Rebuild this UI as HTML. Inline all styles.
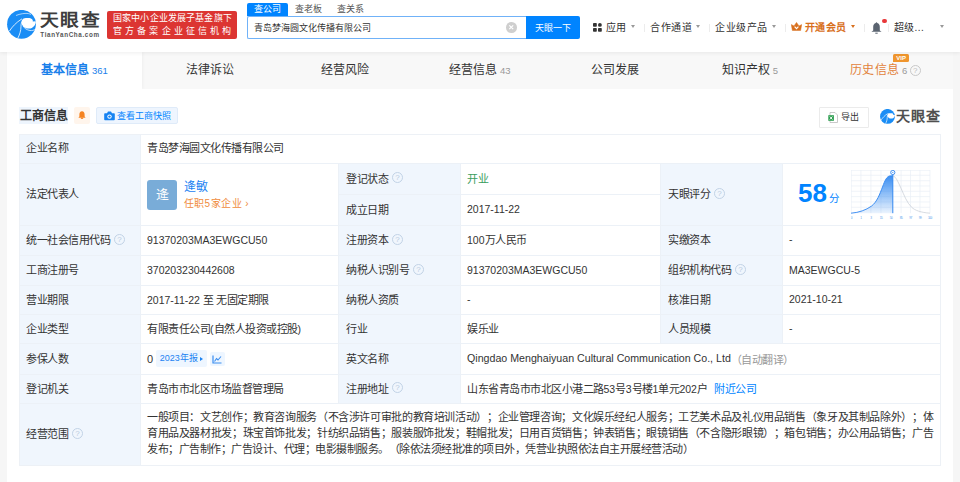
<!DOCTYPE html>
<html lang="zh-CN"><head><meta charset="utf-8">
<style>
*{box-sizing:border-box;margin:0;padding:0}
html,body{width:960px;height:482px;overflow:hidden}
body{text-spacing-trim:space-all;background:#f6f6f6;font-family:"Liberation Sans", sans-serif;color:#333;font-size:10.5px;position:relative}
.abs{position:absolute}
#hdr{position:absolute;left:0;top:0;width:960px;height:52px;background:#fff;box-shadow:0 1px 4px rgba(0,0,0,0.07);z-index:3}
.logotxt{position:absolute;left:40px;top:9px;font-size:17px;font-weight:bold;color:#3d3d3d;letter-spacing:1.6px;line-height:24px;transform:scaleX(1.1);transform-origin:0 0}
.logourl{position:absolute;left:40.3px;top:30.5px;font-size:6.3px;font-weight:bold;color:#555;letter-spacing:0.62px;line-height:8px}
.badge{position:absolute;left:107px;top:10.5px;width:130px;height:28px;background:#dc3532;border-radius:2px;color:#fff;font-size:9px;line-height:12.5px;padding-top:1.5px;padding-left:6px}
.badge div{white-space:nowrap}
.stab{position:absolute;top:3px;height:13.3px;font-size:9px;line-height:13.3px;color:#555;text-align:center}
.stab.on{background:#0084ff;color:#fff;border-radius:2px 2px 0 0}
.sinput{position:absolute;left:247px;top:16.3px;width:279px;height:23px;border:1px solid #70b2f8;border-right:none;border-radius:2px 0 0 2px;background:#fff}
.sinput span{position:absolute;left:5.5px;top:0.6px;line-height:21px;font-size:9px;color:#333}
.clr{position:absolute;left:258px;top:5.2px;width:10.5px;height:10.5px;border-radius:50%;background:#cfcfcf}
.sbtn{position:absolute;left:526px;top:16.3px;width:54px;height:23px;background:#0084ff;border-radius:0 2px 2px 0;color:#fff;font-size:9px;line-height:24.5px;text-align:center}
.nav{position:absolute;top:21px;line-height:14px;font-size:10px;letter-spacing:0.5px;color:#333;white-space:nowrap}
.arr{position:absolute;top:25.2px;width:0;height:0;border-left:2.6px solid transparent;border-right:2.6px solid transparent;border-top:3px solid #999}
.sep{position:absolute;top:23.5px;width:1px;height:8.5px;background:#ececec}
#tabbar{position:absolute;left:7px;top:52px;width:946px;height:37px;background:#f8f8f8}
.tab{position:absolute;top:0;height:37px;text-align:center;line-height:37px;white-space:nowrap}
.tab.active{background:#fff;box-shadow:1px 0 3px rgba(0,0,0,0.04)}
.tt{font-size:12px;color:#333}
.tn{font-size:9.5px;color:#999;margin-left:2.5px}
.active .tt{color:#1a80ea;font-weight:bold}
.active .tn{color:#1a80ea;font-size:9.5px}
.hist .tt{color:#e2833c;letter-spacing:0.3px}
.vip{position:absolute;left:75px;top:1.8px;width:16.5px;height:8.5px;background:#f0962e;color:#fff;font-size:6px;line-height:8.5px;font-weight:bold;border-radius:1.5px 1.5px 1.5px 0;text-align:center}
#card{position:absolute;left:7px;top:89px;width:946px;height:393px;background:#fff}
.sect{position:absolute;left:19px;top:107px;width:49px;height:17px;font-size:12px;font-weight:bold;line-height:19px;color:#333;background:#eef5fd;padding-left:0.5px;overflow:hidden}
.bellb{position:absolute;left:74px;top:107.3px;width:15.5px;height:16.5px;background:#fff5ec;border-radius:2px}
.snap{position:absolute;left:96px;top:107px;width:81.5px;height:16.5px;background:#eef5fe;border:1px solid #dfebf9;border-radius:2px;color:#0084ff;font-size:9px;line-height:16.5px;padding-left:20px}
.export{position:absolute;left:819px;top:107.3px;width:49.5px;height:20.5px;border:1px solid #ebebeb;border-radius:1px;background:#fff;font-size:9px;line-height:18.5px;padding-left:21px;color:#333}
#tbl{position:absolute;left:19px;top:134px;width:922px;height:332px}
#tblb{position:absolute;left:19px;top:134px;width:922px;height:332px;border:1px solid #edf1f6}
.cell{position:absolute;display:flex;align-items:center;padding-left:6px;padding-bottom:2.5px;border-right:1px solid #ecf1f7;border-bottom:1px solid #ecf1f7;white-space:nowrap;font-size:11px;letter-spacing:-0.5px;color:#333}
.lat{font-size:10.5px;letter-spacing:0;padding-bottom:2px}
.ln{font-size:10.5px;letter-spacing:0}
.lab{background:#f0f6fd;padding-left:7px}
.q{display:inline-block;width:11px;height:11px;border:0.8px solid #c2d3e6;border-radius:50%;color:#b9cbe0;font-size:8px;line-height:10px;text-align:center;margin-left:4px;vertical-align:middle;letter-spacing:0}
.tq{border-color:#c8c8c8;color:#bbb;margin-left:2.5px;vertical-align:1px;width:11px;height:11px;line-height:10px;font-size:8px}
.avatar{width:30px;height:30px;background:#79acd8;border-radius:3px;color:#fff;font-size:13px;text-align:center;line-height:30px;margin-left:0;margin-top:3.5px;letter-spacing:0}
.rep{margin-left:6.5px;margin-top:5px}
.repname{color:#1b82f2;font-size:12px;letter-spacing:0;line-height:15px;margin-top:-2px}
.repjob{color:#f08c3c;font-size:10px;letter-spacing:0.5px;line-height:13px;margin-top:2px}
.score{position:absolute;left:15px;top:17px;white-space:nowrap;letter-spacing:0}
.num{font-size:26px;font-weight:bold;color:#0084ff;line-height:24px}
.fen{font-size:10.5px;color:#0084ff;margin-left:2px}
.curve{position:absolute;left:67.5px;top:6.3px}
.nb{display:inline-block;margin-left:3px;height:16.5px;line-height:16.5px;padding:0 4px;letter-spacing:0;background:#eef6ff;color:#1b82f2;font-size:9px;border-radius:2px}
.tri{display:inline-block;width:0;height:0;border-top:2.5px solid transparent;border-bottom:2.5px solid transparent;border-left:3px solid #1b82f2;margin-left:2px;vertical-align:middle}
.chartic{display:inline-flex;align-items:center;justify-content:center;width:15px;height:13.5px;background:#eef6ff;border-radius:2px;margin-left:3px;margin-top:1px}
.scope{text-spacing-trim:space-all;margin-top:-0.5px;white-space:normal;width:786px;font-size:11px;letter-spacing:-0.5px;line-height:16px;text-align:justify;color:#333}
</style></head><body>
<div id="hdr">
<svg class="abs" style="left:7px;top:10.3px" width="29" height="29" viewBox="0 0 29 29">
<defs><clipPath id="cc"><circle cx="14.5" cy="14.3" r="14.4"/></clipPath></defs>
<circle cx="14.5" cy="14.3" r="14.4" fill="#1a8df5"/>
<g clip-path="url(#cc)">
<path d="M16.5,8.4 C19.5,7.9 22,7.9 23.4,8.2 C25,8.7 26.3,10 25.7,11.6 L30,11.3 L30,13.4 L28.6,13.3 C28.2,14.8 27.6,15.6 26.9,16.2 C25.8,17.5 24.5,18.2 23.4,18.4 C22,18.6 20.5,18.5 19.3,18.2 C17.8,17.8 16.6,17 15.9,16.1 C14.8,14.8 14.3,13.6 14.4,12.3 C14.5,10.9 15,9.9 15.5,9.4 C15.9,8.9 16.2,8.6 16.5,8.4Z" fill="#fff"/>
<path d="M2.5,21 C5,17 9,12.5 15,8.8" stroke="#fff" stroke-width="0.8" fill="none"/>
<path d="M9,5.5 C13,3.8 18,3.2 20,3.4 C22,3.6 23,4 24,4.6" stroke="#fff" stroke-width="0.7" fill="none" opacity="0.9"/>
<path d="M10.5,28.8 C12.5,25 14,21 14,16.2 C14,14 14.5,12.5 15,11.7" stroke="#fff" stroke-width="0.8" fill="none"/>
<path d="M16,16 C17.5,18.5 20,20 23,20.5 C25,20.8 27,20.3 28.5,19" stroke="#fff" stroke-width="0.7" fill="none"/>
</g>
</svg>
<div class="logotxt">天眼查</div>
<div class="logourl">TianYanCha.com</div>
<div class="badge"><div style="letter-spacing:0.15px">国家中小企业发展子基金旗下</div><div style="letter-spacing:3.15px">官方备案企业征信机构</div></div>
<div class="stab on" style="left:247px;width:41px">查公司</div>
<div class="stab" style="left:294px;width:29px">查老板</div>
<div class="stab" style="left:336px;width:29px">查关系</div>
<div class="sinput"><span>青岛梦海圆文化传播有限公司</span><div class="clr"><svg width="10.5" height="10.5" viewBox="0 0 10.5 10.5"><path d="M3.3 3.3L7.2 7.2M7.2 3.3L3.3 7.2" stroke="#fff" stroke-width="1.2"/></svg></div></div>
<div class="sbtn">天眼一下</div>
<svg class="abs" style="left:593px;top:23px" width="9" height="9" viewBox="0 0 9 9"><rect x="0" y="0" width="3.8" height="3.8" rx="0.8" fill="#333"/><rect x="5" y="0" width="3.8" height="3.8" rx="1.9" fill="#333"/><rect x="0" y="5" width="3.8" height="3.8" rx="0.8" fill="#333"/><rect x="5" y="5" width="3.8" height="3.8" rx="0.8" fill="#333"/></svg>
<div class="nav" style="left:605.5px">应用</div>
<div class="arr" style="left:631px"></div>
<div class="sep" style="left:644px"></div>
<div class="nav" style="left:650px">合作通道</div>
<div class="arr" style="left:696px"></div>
<div class="sep" style="left:709px"></div>
<div class="nav" style="left:715px">企业级产品</div>
<div class="arr" style="left:771.5px"></div>
<div class="sep" style="left:785px"></div>
<svg class="abs" style="left:791px;top:22.2px" width="11" height="9" viewBox="0 0 11 9"><path d="M0.3 2.6L3 4L5.5 0.4L8 4L10.7 2.6L9.6 8.6H1.4Z" fill="#d8701e" stroke="#d8701e" stroke-width="0.5" stroke-linejoin="round"/><path d="M3.6 4.6L5.5 6.7L7.4 4.6" stroke="#fff" stroke-width="1.1" fill="none"/></svg>
<div class="nav" style="left:804.5px;top:20.5px;color:#d8701e;font-weight:bold">开通会员</div>
<div class="arr" style="left:851px;border-top-color:#d8701e"></div>
<div class="sep" style="left:863.5px"></div>
<svg class="abs" style="left:870.5px;top:21.8px" width="11" height="12" viewBox="0 0 11 12"><path d="M5.5 0.3C5 0.3 4.8 0.6 4.8 1C3 1.4 2.2 3 2.2 5V8.6L0.4 9.8H10.6L8.8 8.6V5C8.8 3 8 1.4 6.2 1C6.2 0.6 6 0.3 5.5 0.3Z" fill="#5b6470"/><path d="M4.3 11.2H6.7" stroke="#5b6470" stroke-width="1"/></svg>
<div class="abs" style="left:882px;top:18.8px;width:4.6px;height:4.6px;border-radius:50%;background:#e8383a"></div>
<div class="sep" style="left:888px"></div>
<div class="nav" style="left:893.5px">超级...</div>
<div class="arr" style="left:939.5px"></div>
</div>
<div id="tabbar">
<div class="tab active" style="left:0.00px;width:135.14px"><span class="tt">基本信息</span><span class="tn">361</span></div>
<div class="tab " style="left:135.14px;width:135.14px"><span class="tt">法律诉讼</span></div>
<div class="tab " style="left:270.29px;width:135.14px"><span class="tt">经营风险</span></div>
<div class="tab " style="left:405.43px;width:135.14px"><span class="tt">经营信息</span><span class="tn">43</span></div>
<div class="tab " style="left:540.57px;width:135.14px"><span class="tt">公司发展</span></div>
<div class="tab " style="left:675.71px;width:135.14px"><span class="tt">知识产权</span><span class="tn">5</span></div>
<div class="tab hist" style="left:810.86px;width:135.14px"><span class="tt">历史信息</span><span class="tn">6</span><span class="q tq">?</span><span class="vip">VIP</span></div>
</div>
<div id="card"></div>
<div class="sect">工商信息</div>
<div class="bellb"><svg style="position:absolute;left:4px;top:3.7px" width="8" height="8" viewBox="0 0 8 8"><path d="M4 0.3C2.2 0.3 1.4 1.7 1.4 3.4V5.6L0.4 6.8H7.6L6.6 5.6V3.4C6.6 1.7 5.8 0.3 4 0.3Z" fill="#f5821f"/><ellipse cx="4" cy="7.2" rx="1.3" ry="0.8" fill="#f5821f"/></svg></div>
<div class="snap"><svg style="position:absolute;left:6.5px;top:3px" width="11" height="9.5" viewBox="0 0 11 9.5"><path d="M1 2.2H3L4 0.6H7L8 2.2H10C10.5 2.2 10.8 2.5 10.8 3V8.5C10.8 9 10.5 9.3 10 9.3H1C0.5 9.3 0.2 9 0.2 8.5V3C0.2 2.5 0.5 2.2 1 2.2Z" fill="#1682f2"/><circle cx="5.5" cy="5.6" r="2.2" fill="#fff"/><circle cx="5.5" cy="5.6" r="1.2" fill="#1682f2"/></svg>查看工商快照</div>
<div class="export"><svg style="position:absolute;left:8px;top:4px" width="10" height="11" viewBox="0 0 10 11"><path d="M2 0.5H7L9.5 3V10.5H2Z" fill="#fff" stroke="#bbb" stroke-width="0.8"/><rect x="0.3" y="3.2" width="5.6" height="5.6" fill="#2c9e4f"/><path d="M1.8 4.5L4.4 7.5M4.4 4.5L1.8 7.5" stroke="#fff" stroke-width="0.9"/></svg>导出</div>
<svg class="abs" style="left:880px;top:108.7px" width="15" height="15" viewBox="0 0 29 29">
<circle cx="14.5" cy="14.3" r="14.4" fill="#1a8df5"/>
<g clip-path="url(#cc)">
<path d="M16.5,8.4 C19.5,7.9 22,7.9 23.4,8.2 C25,8.7 26.3,10 25.7,11.6 L30,11.3 L30,13.4 L28.6,13.3 C28.2,14.8 27.6,15.6 26.9,16.2 C25.8,17.5 24.5,18.2 23.4,18.4 C22,18.6 20.5,18.5 19.3,18.2 C17.8,17.8 16.6,17 15.9,16.1 C14.8,14.8 14.3,13.6 14.4,12.3 C14.5,10.9 15,9.9 15.5,9.4 C15.9,8.9 16.2,8.6 16.5,8.4Z" fill="#fff"/>
<path d="M2.5,21 C5,17 9,12.5 15,8.8" stroke="#fff" stroke-width="1.3" fill="none"/>
<path d="M10.5,28.8 C12.5,25 14,21 14,16.2 C14,14 14.5,12.5 15,11.7" stroke="#fff" stroke-width="1.3" fill="none"/>
</g>
</svg>
<div class="abs" style="left:896px;top:107px;font-size:14px;line-height:18px;font-weight:bold;color:#505050;letter-spacing:1px">天眼查</div>
<div id="tbl">
<div class="cell lab " style="left:0px;top:0px;width:122px;height:30px">企业名称</div>
<div class="cell val " style="left:122px;top:0px;width:800px;height:30px"><span>青岛梦海圆文化传播有限公司</span></div>
<div class="cell lab " style="left:0px;top:30px;width:122px;height:62px">法定代表人</div>
<div class="cell val " style="left:122px;top:30px;width:198px;height:62px"><div class="avatar">逄</div><div class="rep"><div class="repname">逄敏</div><div class="repjob">任职5家企业 ›</div></div></div>
<div class="cell lab " style="left:320px;top:30px;width:122px;height:31px">登记状态<span class="q">?</span></div>
<div class="cell val " style="left:442px;top:30px;width:200px;height:31px"><span style="color:#3a9d5d">开业</span></div>
<div class="cell lab " style="left:320px;top:61px;width:122px;height:31px">成立日期</div>
<div class="cell val lat" style="left:442px;top:61px;width:200px;height:31px">2017-11-22</div>
<div class="cell lab " style="left:642px;top:30px;width:122px;height:62px">天眼评分<span class="q">?</span></div>
<div class="cell val " style="left:764px;top:30px;width:158px;height:62px"><div class="score"><span class="num">58</span><span class="fen">分</span></div>
<svg class="curve" width="86" height="54" viewBox="0 0 86 54">
<defs><linearGradient id="g" x1="0" y1="0" x2="0" y2="1"><stop offset="0" stop-color="#3a8ef2"/><stop offset="1" stop-color="#3a8ef2" stop-opacity="0.1"/></linearGradient></defs>
<g stroke="#e9eff7" stroke-width="0.7" fill="none">
<path d="M0.3 0V43.2M9.9 0V43.2M19.9 0V43.2M30 0V43.2M40 0V43.2M50.1 0V43.2M59.5 0V43.2M69 0V43.2M79 0V43.2"/>
<path d="M0 0.3H79M0 5.3H79M0 10.7H79M0 16H79M0 21.3H79M0 26.6H79M0 32H79M0 37.3H79"/>
</g>
<path d="M0,43.2 C8,42.6 15,40 20.5,36.1 C26,32 28.8,24 31.5,17 C34,10 36,6.2 39,5.9 L41.8,5.8 L41.8,43.2Z" fill="url(#g)"/>
<path d="M0,43.2 C8,42.6 15,40 20.5,36.1 C26,32 28.8,24 31.5,17 C34,10 36,6.2 39,5.9 L41.8,5.8" stroke="#2f86f0" stroke-width="0.9" fill="none"/>
<path d="M41.8,5.8 C45,6.5 47,12 50.1,18.4 C53,25 56,33 60.7,37.3 C64,40.5 70,42.5 79,43.2" stroke="#c5ccd4" stroke-width="0.7" fill="none"/>
<path d="M41.8 4.6V43.2" stroke="#2f86f0" stroke-width="1"/>
<circle cx="41.8" cy="2.5" r="2.1" fill="#fff" stroke="#2f86f0" stroke-width="0.9"/>
<circle cx="41.8" cy="2.5" r="0.6" fill="#2f86f0"/>
<g fill="#5a9fee" font-size="3.2" font-family="Liberation Sans" text-anchor="middle">
<text x="0.3" y="48.5">0</text><text x="9.9" y="48.5">1</text><text x="19.9" y="48.5">3</text><text x="30" y="48.5">15</text><text x="40" y="48.5">50</text><text x="50.1" y="48.5">85</text><text x="59.5" y="48.5">97</text><text x="69" y="48.5">99</text><text x="79" y="48.5">100</text>
</g>
</svg></div>
<div class="cell lab " style="left:0px;top:92px;width:122px;height:30px">统一社会信用代码<span class="q">?</span></div>
<div class="cell val lat" style="left:122px;top:92px;width:198px;height:30px">91370203MA3EWGCU50</div>
<div class="cell lab " style="left:320px;top:92px;width:122px;height:30px">注册资本<span class="q">?</span></div>
<div class="cell val " style="left:442px;top:92px;width:200px;height:30px"><span><span class="ln">100</span>万人民币</span></div>
<div class="cell lab " style="left:642px;top:92px;width:122px;height:30px">实缴资本</div>
<div class="cell val " style="left:764px;top:92px;width:158px;height:30px"><span><span class="ln">-</span></span></div>
<div class="cell lab " style="left:0px;top:122px;width:122px;height:30px">工商注册号</div>
<div class="cell val lat" style="left:122px;top:122px;width:198px;height:30px">370203230442608</div>
<div class="cell lab " style="left:320px;top:122px;width:122px;height:30px">纳税人识别号<span class="q">?</span></div>
<div class="cell val lat" style="left:442px;top:122px;width:200px;height:30px">91370203MA3EWGCU50</div>
<div class="cell lab " style="left:642px;top:122px;width:122px;height:30px">组织机构代码<span class="q">?</span></div>
<div class="cell val lat" style="left:764px;top:122px;width:158px;height:30px">MA3EWGCU-5</div>
<div class="cell lab " style="left:0px;top:152px;width:122px;height:29px">营业期限</div>
<div class="cell val " style="left:122px;top:152px;width:198px;height:29px"><span><span class="ln">2017-11-22 </span>至<span class="ln"> </span>无固定期限</span></div>
<div class="cell lab " style="left:320px;top:152px;width:122px;height:29px">纳税人资质</div>
<div class="cell val " style="left:442px;top:152px;width:200px;height:29px"><span><span class="ln">-</span></span></div>
<div class="cell lab " style="left:642px;top:152px;width:122px;height:29px">核准日期</div>
<div class="cell val lat" style="left:764px;top:152px;width:158px;height:29px">2021-10-21</div>
<div class="cell lab " style="left:0px;top:181px;width:122px;height:29px">企业类型</div>
<div class="cell val " style="left:122px;top:181px;width:198px;height:29px"><span>有限责任公司<span class="ln">(</span>自然人投资或控股<span class="ln">)</span></span></div>
<div class="cell lab " style="left:320px;top:181px;width:122px;height:29px">行业</div>
<div class="cell val " style="left:442px;top:181px;width:200px;height:29px"><span>娱乐业</span></div>
<div class="cell lab " style="left:642px;top:181px;width:122px;height:29px">人员规模</div>
<div class="cell val " style="left:764px;top:181px;width:158px;height:29px"><span><span class="ln">-</span></span></div>
<div class="cell lab " style="left:0px;top:210px;width:122px;height:31px">参保人数</div>
<div class="cell val " style="left:122px;top:210px;width:198px;height:31px"><span style="margin-top:1.5px;display:flex;align-items:center">0<span class="nb">2023年报<i class="tri"></i></span><span class="chartic"><svg width="10" height="9" viewBox="0 0 10 9"><path d="M1 0.5V8H9.5" stroke="#3b8ef0" stroke-width="1.2" fill="none"/><path d="M2.5 6.5L4.5 3.5L6 5L9 1.5" stroke="#3b8ef0" stroke-width="1.1" fill="none"/></svg></span></span></div>
<div class="cell lab " style="left:320px;top:210px;width:122px;height:31px">英文名称</div>
<div class="cell val " style="left:442px;top:210px;width:480px;height:31px"><span class="lat" style="font-size:10.65px;position:relative;top:1px">Qingdao Menghaiyuan Cultural Communication Co., Ltd</span><span style="color:#999;position:relative;top:1px">（自动翻译）</span></div>
<div class="cell lab " style="left:0px;top:241px;width:122px;height:29px">登记机关</div>
<div class="cell val " style="left:122px;top:241px;width:198px;height:29px"><span>青岛市市北区市场监督管理局</span></div>
<div class="cell lab " style="left:320px;top:241px;width:122px;height:29px">注册地址<span class="q">?</span></div>
<div class="cell val " style="left:442px;top:241px;width:480px;height:29px"><span>山东省青岛市市北区小港二路<span class="ln">53</span>号<span class="ln">3</span>号楼<span class="ln">1</span>单元<span class="ln">202</span>户<span style="color:#0084ff;margin-left:7px">附近公司</span></span></div>
<div class="cell lab " style="left:0px;top:270px;width:122px;height:62px">经营范围<span class="q">?</span></div>
<div class="cell val " style="left:122px;top:270px;width:800px;height:62px"><div class="scope">一般项目：文艺创作；教育咨询服务（不含涉许可审批的教育培训活动）；企业管理咨询；文化娱乐经纪人服务；工艺美术品及礼仪用品销售（象牙及其制品除外）；体育用品及器材批发；珠宝首饰批发；针纺织品销售；服装服饰批发；鞋帽批发；日用百货销售；钟表销售；眼镜销售（不含隐形眼镜）；箱包销售；办公用品销售；广告发布；广告制作；广告设计、代理；电影摄制服务。（除依法须经批准的项目外，凭营业执照依法自主开展经营活动）</div></div>
</div>
<div id="tblb"></div>
</body></html>
